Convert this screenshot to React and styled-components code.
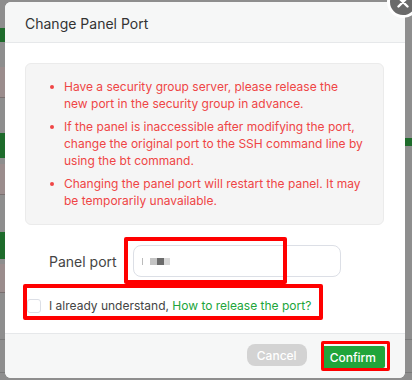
import React from "react";
import styled, { createGlobalStyle } from "styled-components";

const Global = createGlobalStyle`
  html, body { margin: 0; padding: 0; }
  body { width: 412px; height: 380px; overflow: hidden; font-family: Inter, "Noto Sans", sans-serif; }
`;

const Page = styled.div`
  position: relative;
  width: 412px;
  height: 380px;
  background: #8e8e8e;
  overflow: hidden;
`;

const Backdrop = styled.div`
  display: flex;
  flex-direction: column;
  padding-top: 28px;
  width: 100%;
`;

const BgBlock = styled.div`
  height: ${(p) => p.$h}px;
  margin-top: ${(p) => p.$mt || 0}px;
  width: ${(p) => p.$w || 30}px;
  background: ${(p) => p.$c};
  border-bottom: ${(p) => (p.$line ? "1px solid #7a7070" : "none")};
`;

const BgRightMark = styled.div`
  position: absolute;
  right: 0;
  top: 138px;
  width: 7px;
  height: 8px;
  background: #1e6b2b;
`;

const Modal = styled.div`
  position: absolute;
  left: 5px;
  top: 2px;
  width: 400px;
  height: 376px;
  background: #fff;
  border-radius: 6px;
  display: flex;
  flex-direction: column;
`;

const Header = styled.div`
  height: 41px;
  box-sizing: border-box;
  flex: none;
  display: flex;
  align-items: center;
  padding: 2px 0 0 20px;
  background: #f6f7f7;
  border-bottom: 1px solid #e6e8ea;
  border-radius: 6px 6px 0 0;
  font-size: 14px;
  color: #333;
`;

const CloseButton = styled.div`
  position: absolute;
  left: 382px;
  top: -16px;
  width: 26px;
  height: 26px;
  border-radius: 50%;
  background: #6a6a6a;
  border: 3px solid #fff;
  display: flex;
  align-items: center;
  justify-content: center;
`;

const Body = styled.div`
  flex: 1;
  padding: 20px 21px 0 20px;
  display: flex;
  flex-direction: column;
`;

const Alert = styled.ul`
  margin: 0;
  list-style: none;
  background: #f5f5f5;
  border: 1px solid #ebebeb;
  border-radius: 6px;
  padding: 14px 18px 15px 38px;
  display: flex;
  flex-direction: column;
  gap: 6px;
`;

const AlertItem = styled.li`
  position: relative;
  font-size: 12px;
  line-height: 17px;
  color: #ef4545;
  &::before {
    content: "";
    position: absolute;
    left: -14px;
    top: 7px;
    width: 4px;
    height: 4px;
    border-radius: 50%;
    background: #ef4545;
  }
`;

const FormRow = styled.div`
  position: relative;
  display: flex;
  align-items: center;
  margin-top: ${(p) => p.$mt}px;
`;

const Label = styled.label`
  width: 108px;
  padding-left: 24px;
  box-sizing: border-box;
  font-size: 14px;
  color: #444;
`;

const Input = styled.div`
  width: 208px;
  height: 32px;
  box-sizing: border-box;
  border: 1px solid #dcdfe6;
  border-radius: 8px;
  display: flex;
  align-items: center;
  padding-left: 8px;
`;

const Pixel = styled.span`
  width: ${(p) => p.$w}px;
  height: 7px;
  background: ${(p) => p.$c};
`;

const Annotation = styled.div`
  position: absolute;
  left: ${(p) => p.$l}px;
  top: ${(p) => p.$t}px;
  width: ${(p) => p.$w}px;
  height: ${(p) => p.$h}px;
  border: ${(p) => p.$b || 4}px solid #ff0000;
  box-sizing: border-box;
  border-radius: 2px;
  pointer-events: none;
`;

const Check = styled.span`
  flex: none;
  width: 14px;
  height: 14px;
  box-sizing: border-box;
  border: 1px solid #dcdfe6;
  border-radius: 3px;
  margin-left: 2px;
  margin-right: 8px;
  background: #fff;
`;

const CheckText = styled.span`
  font-size: 12px;
  color: #444;
`;

const Link = styled.span`
  color: #20a53a;
`;

const Footer = styled.div`
  position: relative;
  height: 44px;
  flex: none;
  background: #f6f7f7;
  border-top: 1px solid #e6e8ea;
  border-radius: 0 0 6px 6px;
  display: flex;
  align-items: center;
  justify-content: flex-end;
  gap: 14px;
  padding-right: 20px;
`;

const Button = styled.button`
  height: 22px;
  padding: 0 ${(p) => (p.$primary ? 9 : 10)}px;
  border: none;
  border-radius: ${(p) => (p.$primary ? 2 : 8)}px;
  background: ${(p) => (p.$primary ? "#20a53a" : "#d3d3d3")};
  color: #fff;
  font-family: Inter, sans-serif;
  font-size: 12px;
  font-weight: 500;
  margin-top: ${(p) => (p.$primary ? 2 : -2)}px;
`;

export default function App() {
  return (
    <Page>
      <Global />
      <Backdrop>
        <BgBlock $h={14} $c="#1e6b2b" />
        <BgBlock $mt={25} $h={30} $c="#9b8d8d" $line />
        <BgBlock $mt={35} $h={25} $c="#1e6b2b" />
        <BgBlock $mt={6} $h={30} $c="#9b8d8d" $line />
        <BgBlock $mt={37} $h={27} $c="#1e6b2b" />
        <BgBlock $mt={5} $h={28} $c="#9b8d8d" $line />
        <BgBlock $mt={46} $h={1} $c="#7a7a7a" $w={412} />
        <BgBlock $mt={32} $h={1} $c="#7a7a7a" $w={412} />
      </Backdrop>
      <BgRightMark />
      <Modal>
        <CloseButton>
          <svg width="12" height="12" viewBox="0 0 12 12">
            <path d="M1.5 1.5 L10.5 10.5 M10.5 1.5 L1.5 10.5" stroke="#fff" strokeWidth="2.4" strokeLinecap="round" />
          </svg>
        </CloseButton>
        <Header>Change Panel Port</Header>
        <Body>
          <Alert>
            <AlertItem>Have a security group server, please release the new port in the security group in advance.</AlertItem>
            <AlertItem>If the panel is inaccessible after modifying the port, change the original port to the SSH command line by using the bt command.</AlertItem>
            <AlertItem>Changing the panel port will restart the panel. It may be temporarily unavailable.</AlertItem>
          </Alert>
          <FormRow $mt={20}>
            <Label>Panel port</Label>
            <Input>
              <Pixel $w={1} $c="#bbb" />
              <Pixel $w={7} $c="#fff" />
              <Pixel $w={7} $c="#c4c4c4" />
              <Pixel $w={7} $c="#6b6b6b" />
              <Pixel $w={6} $c="#d8d8d8" />
            </Input>
            <Annotation $l={99} $t={-8} $w={163} $h={47} />
          </FormRow>
          <FormRow $mt={21}>
            <Check />
            <CheckText>
              I already understand, <Link>How to release the port?</Link>
            </CheckText>
            <Annotation $l={-2} $t={-14} $w={300} $h={36} />
          </FormRow>
        </Body>
        <Footer>
          <Button>Cancel</Button>
          <Button $primary>Confirm</Button>
          <Annotation $l={316} $t={7} $w={69} $h={30} $b={3} />
        </Footer>
      </Modal>
    </Page>
  );
}
